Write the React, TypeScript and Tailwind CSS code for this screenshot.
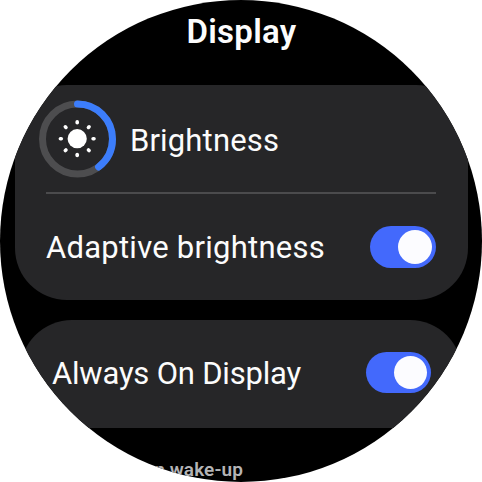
import React, { useState } from "react";
import clsx from "clsx";

type toggleProps = {
  label: string;
  on: boolean;
  small?: boolean;
  onChange: () => void;
};

const Toggle = ({ label, on, small, onChange }: toggleProps) => {
  return (
    <button
      role="switch"
      aria-checked={on}
      aria-label={label}
      onClick={onChange}
      className={clsx(
        "flex shrink-0 items-center rounded-full",
        small ? "h-[41px] w-[65px] px-1" : "h-[42px] w-[66px] px-1",
        on ? "justify-end bg-[#4369fc]" : "justify-start bg-[#4d4d4f]"
      )}
    >
      <span
        className={clsx(
          "rounded-full bg-[#fcfcff]",
          small ? "size-[33px]" : "size-[34px]"
        )}
      />
    </button>
  );
};

const BrightnessDial = ({ value }: { value: number }) => {
  return (
    <svg viewBox="0 0 78 78" className="size-[78px] shrink-0" fill="none">
      <circle cx="38.5" cy="39" r="35" stroke="#4d4d4f" strokeWidth="7" />
      <circle
        cx="38.5"
        cy="39"
        r="35"
        stroke="#3c7dfb"
        strokeWidth="7"
        strokeLinecap="round"
        pathLength="100"
        strokeDasharray={`${value} 100`}
        transform="rotate(-90 38.5 39)"
      />
      <circle cx="38.2" cy="38.7" r="9.6" fill="#fff" />
      {[0, 45, 90, 135, 180, 225, 270, 315].map((deg) => (
        <path
          key={deg}
          d="M38.2 21.9v0.9"
          stroke="#fff"
          strokeWidth="3.6"
          strokeLinecap="round"
          transform={`rotate(${deg} 38.2 38.7)`}
        />
      ))}
    </svg>
  );
};

const App = () => {
  const [adaptive, setAdaptive] = useState<boolean>(true);
  const [alwaysOn, setAlwaysOn] = useState<boolean>(true);

  return (
    <div className="h-[482px] w-[482px] overflow-hidden bg-white">
      <main className="flex h-[482px] w-[482px] flex-col overflow-hidden rounded-full bg-black font-[Roboto,sans-serif] whitespace-nowrap text-[#fcfcfc]">
        <h1 className="h-[85px] shrink-0 pt-3 pl-px text-center text-[33px] leading-[40px] font-semibold tracking-[0.3px]">
          Display
        </h1>

        <section className="mr-[14px] ml-[15px] flex h-[215px] shrink-0 flex-col rounded-[52px] bg-[#262628] pr-8 pl-[31px]">
          <div className="-ml-[7px] flex h-[107px] shrink-0 items-center gap-[13px]">
            <BrightnessDial value={39.7} />
            <span className="pt-[5px] text-[31px] tracking-[0.15px]">
              Brightness
            </span>
          </div>
          <div className="h-[2px] shrink-0 bg-[#4b4b4d]" />
          <div className="flex h-[106px] items-center justify-between">
            <span className="pt-[2px] text-[31px] tracking-[0.25px]">
              Adaptive brightness
            </span>
            <Toggle
              label="Adaptive brightness"
              on={adaptive}
              onChange={() => setAdaptive(!adaptive)}
            />
          </div>
        </section>

        <section className="mx-5 mt-5 flex h-[108px] shrink-0 items-center justify-between rounded-t-[52px] bg-[#262628] pr-[31px] pb-[3px] pl-8">
          <span className="pt-[3px] text-[31px] tracking-[-0.2px]">
            Always On Display
          </span>
          <Toggle
            small
            label="Always On Display"
            on={alwaysOn}
            onChange={() => setAlwaysOn(!alwaysOn)}
          />
        </section>

        <p className="mt-[30px] mr-[239px] shrink-0 text-right text-[19px] leading-6 font-semibold tracking-[0.1px] text-[#b4b4b6]">
          Screen wake-up
        </p>
      </main>
    </div>
  );
};

export default App;
